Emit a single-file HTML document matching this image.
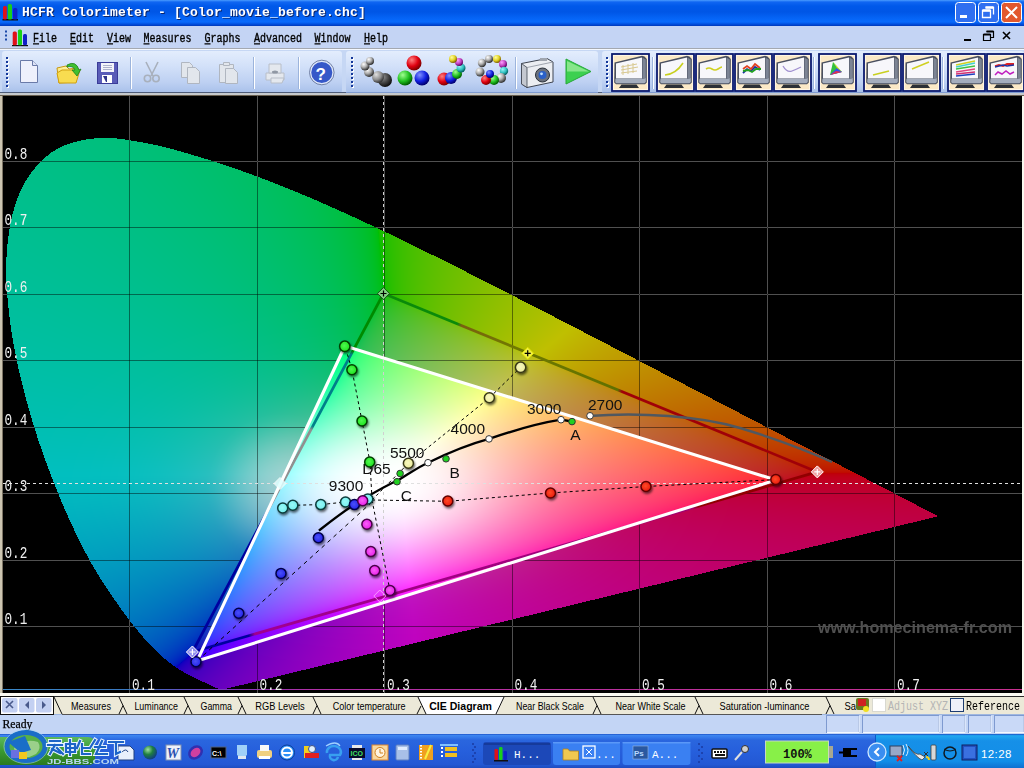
<!DOCTYPE html>
<html><head><meta charset="utf-8">
<style>
*{margin:0;padding:0;box-sizing:border-box}
html,body{width:1024px;height:768px;overflow:hidden;background:#000;font-family:"Liberation Sans",sans-serif}
.a{position:absolute}
#title{left:0;top:0;width:1024px;height:26px;background:linear-gradient(#4a9cff 0,#1066f2 2px,#0059ea 6px,#0056e6 12px,#0666f8 19px,#086afc 22px,#004ad8 24.5px,#0038b8 26px)}
#ttext{left:22px;top:5px;color:#fff;font:bold 13px "Liberation Mono",monospace;letter-spacing:0.2px;text-shadow:1px 1px 0 #0a246a;white-space:pre}
#menu{left:0;top:26px;width:1024px;height:23px;background:#c4d4f4;border-bottom:1px solid #a4a8b0}
#menu span{position:absolute;top:6px;font:10px "Liberation Mono",monospace;color:#000;-webkit-text-stroke:0.3px #000;white-space:pre;display:inline-block;transform:scaleY(1.25);transform-origin:0 0}
#tbbg{left:0;top:49px;width:1024px;height:47px;background:#c5d6f3}
.tb{top:51px;height:42px;border-radius:3px;background:linear-gradient(#e2ecfd 0,#d4e2fa 30%,#bcd0f2 70%,#a9c1ec 100%);box-shadow:inset -1px -1px 0 #8ba6d6}
#chart{left:0;top:96px;width:1024px;height:597px;background:#000}
#tabs{left:0;top:693px;width:1024px;height:22px;background:#ece9d8;border-top:3px solid #fbfaf3}
#status{left:0;top:715px;width:1024px;height:19px;background:#c4d5f4}
#task{left:0;top:734px;width:1024px;height:34px;background:linear-gradient(#3b83f1 0,#2a6fe6 2px,#245ddb 6px,#2157d6 50%,#1e52d0 90%,#1d4fc8 100%)}
</style></head><body>
<div class="a" id="chart"></div><div class="a" style="left:1022px;top:96px;width:2px;height:597px;background:#f8f8ee"></div><div class="a" style="left:0;top:96px;width:2px;height:597px;background:#cdc6b2"></div><div class="a" style="left:2px;top:96px;width:1px;height:597px;background:#7c7464"></div>
<svg class="a" style="left:0;top:0" width="1024" height="768" viewBox="0 0 1024 768">
<defs>
<linearGradient id="fbA" gradientUnits="userSpaceOnUse" x1="0" y1="300" x2="940" y2="500"><stop offset="0" stop-color="#00bf8e"/><stop offset="0.3" stop-color="#00bf78"/><stop offset="0.42" stop-color="#30bf10"/><stop offset="0.58" stop-color="#b0b800"/><stop offset="0.75" stop-color="#c86010"/><stop offset="1" stop-color="#c80030"/></linearGradient>
<linearGradient id="fbB" gradientUnits="userSpaceOnUse" x1="0" y1="420" x2="0" y2="690"><stop offset="0" stop-color="#00b4a8" stop-opacity="0"/><stop offset="0.35" stop-color="#00b0b0" stop-opacity="0.8"/><stop offset="1" stop-color="#0048c0"/></linearGradient>
<linearGradient id="fbC" gradientUnits="userSpaceOnUse" x1="200" y1="690" x2="940" y2="520"><stop offset="0" stop-color="#6000c8"/><stop offset="0.3" stop-color="#a800c0"/><stop offset="1" stop-color="#c00040"/></linearGradient>
<radialGradient id="fbW" gradientUnits="userSpaceOnUse" cx="375" cy="485" r="260"><stop offset="0" stop-color="#fff"/><stop offset="0.25" stop-color="#fff" stop-opacity="0.85"/><stop offset="1" stop-color="#fff" stop-opacity="0"/></radialGradient>
<linearGradient id="fbT" gradientUnits="userSpaceOnUse" x1="250" y1="480" x2="770" y2="480"><stop offset="0" stop-color="#40f0ff"/><stop offset="0.3" stop-color="#e0ffd0"/><stop offset="0.6" stop-color="#ffd090"/><stop offset="1" stop-color="#ff2040"/></linearGradient>
<linearGradient id="fbT2" gradientUnits="userSpaceOnUse" x1="0" y1="346" x2="0" y2="661"><stop offset="0" stop-color="#40ff60" stop-opacity="0.6"/><stop offset="0.35" stop-color="#fff" stop-opacity="0"/><stop offset="0.7" stop-color="#fff" stop-opacity="0"/><stop offset="1" stop-color="#a020ff" stop-opacity="0.8"/></linearGradient>
<linearGradient id="fbT3" gradientUnits="userSpaceOnUse" x1="197" y1="661" x2="372" y2="500"><stop offset="0" stop-color="#3040ff" stop-opacity="0.95"/><stop offset="0.7" stop-color="#60c0ff" stop-opacity="0"/></linearGradient>
<linearGradient id="fbT4" gradientUnits="userSpaceOnUse" x1="420" y1="600" x2="380" y2="480"><stop offset="0" stop-color="#f020f0" stop-opacity="0.9"/><stop offset="1" stop-color="#ff80ff" stop-opacity="0"/></linearGradient>
</defs>
<rect x="3" y="96" width="1019" height="597" fill="#000"/>
<path d="M223 689 220 689 218 688 214 687 211 685 207 684 203 682 199 680 194 678 191 676 188 675 185 673 182 671 178 669 174 666 170 663 165 659 160 654 154 649 148 643 141 635 134 626 126 616 118 604 109 591 99 576 89 559 79 540 69 519 59 497 50 472 40 445 31 418 24 391 17 362 12 335 8 308 6 282 6 257 9 234 13 213 19 194 28 177 39 164 51 153 65 145 80 141 96 138 113 138 130 140 147 143 164 147 182 152 199 157 215 162 231 167 247 173 263 179 279 185 294 191 310 198 325 204 340 211 356 218 371 225 386 232 401 240 416 247 432 255 447 262 462 270 477 277 492 285 507 293 523 301 538 308 553 316 568 324 583 332 597 339 612 347 626 354 641 362 655 369 669 376 683 384 696 391 709 397 722 404 735 411 747 417 759 423 770 429 781 435 791 440 801 445 810 450 819 455 828 459 836 463 843 467 850 471 857 474 863 477 869 480 874 483 879 485 883 488 887 490 891 492 895 494 898 495 901 497 904 499 907 500 912 503 916 505 920 507 923 508 926 510 929 512 932 513 935 515 938 516Z" fill="url(#fbA)"/>
<path d="M0 420H300L200 690H0Z" fill="url(#fbB)" clip-path="url(#fbclip)"/>
<clipPath id="fbclip"><path d="M223 689 220 689 218 688 214 687 211 685 207 684 203 682 199 680 194 678 191 676 188 675 185 673 182 671 178 669 174 666 170 663 165 659 160 654 154 649 148 643 141 635 134 626 126 616 118 604 109 591 99 576 89 559 79 540 69 519 59 497 50 472 40 445 31 418 24 391 17 362 12 335 8 308 6 282 6 257 9 234 13 213 19 194 28 177 39 164 51 153 65 145 80 141 96 138 113 138 130 140 147 143 164 147 182 152 199 157 215 162 231 167 247 173 263 179 279 185 294 191 310 198 325 204 340 211 356 218 371 225 386 232 401 240 416 247 432 255 447 262 462 270 477 277 492 285 507 293 523 301 538 308 553 316 568 324 583 332 597 339 612 347 626 354 641 362 655 369 669 376 683 384 696 391 709 397 722 404 735 411 747 417 759 423 770 429 781 435 791 440 801 445 810 450 819 455 828 459 836 463 843 467 850 471 857 474 863 477 869 480 874 483 879 485 883 488 887 490 891 492 895 494 898 495 901 497 904 499 907 500 912 503 916 505 920 507 923 508 926 510 929 512 932 513 935 515 938 516Z"/></clipPath>
<path d="M140 650L224 689L938 516L776 480L197 661Z" fill="url(#fbC)" clip-path="url(#fbclip)"/>
<path d="M345 346L776 480L197 661Z" fill="url(#fbT)"/>
<path d="M345 346L776 480L197 661Z" fill="url(#fbT2)"/>
<path d="M345 346L776 480L197 661Z" fill="url(#fbW)"/><path d="M345 346L776 480L197 661Z" fill="url(#fbT4)"/><path d="M345 346L776 480L197 661Z" fill="url(#fbT3)"/>
<g stroke="#505050" stroke-width="1"><path d="M129.5 96V693M257.5 96V693M384.5 96V693M512.5 96V693M639.5 96V693M767.5 96V693M894.5 96V693M3 161.5H1022M3 227.5H1022M3 294.5H1022M3 360.5H1022M3 427.5H1022M3 493.5H1022M3 560.5H1022M3 626.5H1022"/></g>
</svg>
<canvas id="cv" class="a" width="1024" height="768" style="left:0;top:0"></canvas>
<svg class="a" style="left:0;top:0" width="1024" height="768" viewBox="0 0 1024 768">
<defs>
<radialGradient id="rR" cx="0.45" cy="0.45" r="0.6"><stop offset="0" stop-color="#ff4828"/><stop offset="1" stop-color="#e81808"/></radialGradient><radialGradient id="rG" cx="0.45" cy="0.45" r="0.6"><stop offset="0" stop-color="#50f850"/><stop offset="1" stop-color="#18e018"/></radialGradient><radialGradient id="rB" cx="0.45" cy="0.45" r="0.6"><stop offset="0" stop-color="#4a50f8"/><stop offset="1" stop-color="#2020e8"/></radialGradient><radialGradient id="rC" cx="0.45" cy="0.45" r="0.6"><stop offset="0" stop-color="#98f8f8"/><stop offset="1" stop-color="#70eeee"/></radialGradient><radialGradient id="rM" cx="0.45" cy="0.45" r="0.6"><stop offset="0" stop-color="#f860f8"/><stop offset="1" stop-color="#e818e8"/></radialGradient><radialGradient id="rY" cx="0.45" cy="0.45" r="0.6"><stop offset="0" stop-color="#f8f8c0"/><stop offset="1" stop-color="#eaea98"/></radialGradient><filter id="sh" x="-50%" y="-50%" width="200%" height="200%"><feDropShadow dx="1" dy="1.8" stdDeviation="1.3" flood-color="#000" flood-opacity="0.6"/></filter>
<linearGradient id="gGR" gradientUnits="userSpaceOnUse" x1="383.5" y1="293.5" x2="817.3" y2="471.9">
<stop offset="0" stop-color="#0a8a0a"/><stop offset="0.17" stop-color="#0a8a0a"/><stop offset="0.18" stop-color="#7a6010"/><stop offset="0.3" stop-color="#707a00"/><stop offset="0.54" stop-color="#607000"/><stop offset="0.55" stop-color="#a00008"/><stop offset="1" stop-color="#a00008"/></linearGradient>
<linearGradient id="gGB" gradientUnits="userSpaceOnUse" x1="383.5" y1="293.5" x2="192.4" y2="652">
<stop offset="0" stop-color="#008a00"/><stop offset="0.16" stop-color="#008a00"/><stop offset="0.17" stop-color="#00808a"/><stop offset="0.37" stop-color="#00808a"/><stop offset="0.38" stop-color="#909090"/><stop offset="0.6" stop-color="#909090"/><stop offset="0.62" stop-color="#0000a0"/><stop offset="1" stop-color="#0000a0"/></linearGradient>
<linearGradient id="gBR" gradientUnits="userSpaceOnUse" x1="192.4" y1="652" x2="817.3" y2="471.9">
<stop offset="0" stop-color="#0000a0"/><stop offset="0.09" stop-color="#0000a0"/><stop offset="0.1" stop-color="#a00090"/><stop offset="0.8" stop-color="#a00070"/><stop offset="0.81" stop-color="#900000"/><stop offset="1" stop-color="#900000"/></linearGradient>
<linearGradient id="gAx" x1="0" y1="0" x2="1" y2="0"><stop offset="0" stop-color="#3a88c8"/><stop offset="0.125" stop-color="#3a78c0"/><stop offset="0.2" stop-color="#7040c0"/><stop offset="0.3" stop-color="#b030a8"/><stop offset="1" stop-color="#c83090"/></linearGradient>
</defs>
<rect x="3" y="689" width="1019" height="1" fill="url(#gAx)"/>
<g stroke-dasharray="3 3" stroke-width="1" fill="none">
<path d="M383.5 96V692" stroke="#d0d0d0"/>
<path d="M3 483.5H1022" stroke="#e0e0e0"/>
</g>
<g fill="none" stroke-width="2.7" stroke-linecap="round">
<path d="M383.5 293.5L817.3 471.9" stroke="url(#gGR)"/>
<path d="M383.5 293.5L192.4 652" stroke="url(#gGB)"/>
<path d="M192.4 652L817.3 471.9" stroke="url(#gBR)"/>
</g>
<path d="M345 346L776 480L197 661Z" fill="none" stroke="#fff" stroke-width="3.1" stroke-linejoin="miter"/>
<g fill="none" stroke="#000" stroke-width="1" stroke-dasharray="3 3">
<path d="M372 500L447.8 501.3L550.5 493L646 486.5L775.8 479.6"/>
<path d="M372 499L370 462L362 421L352 370L345 346"/>
<path d="M372 502L196 662" stroke-dasharray="4 4"/>
<path d="M372 500L345.5 502L320.8 504.6L292.8 505.3L282.7 508"/>
<path d="M372 500L390 590.6"/>
<path d="M372 500L408.4 463.3L489.4 397.8L520.6 367.3"/>
</g>
<path d="M588.6 416 C 640 412, 700 416, 740 428 S 810 452, 832 462" fill="none" stroke="#505860" stroke-width="2.4"/>
<path d="M318.9 530.6 C 335 518, 345 510, 360 501 S 385 486, 399 479.8 C 410 473, 420 466, 428 462.7 C 450 452, 470 444, 489 438.9 C 515 430, 540 423, 561 419.7 L 572 421.5" fill="none" stroke="#000" stroke-width="2.3"/>
<g stroke="#333" stroke-width="1">
<circle cx="590" cy="415.8" r="3.3" fill="#fff"/><circle cx="561" cy="419.7" r="3.3" fill="#fff"/><circle cx="489" cy="438.9" r="3.3" fill="#fff"/><circle cx="428" cy="462.7" r="3.3" fill="#fff"/>
<circle cx="572" cy="421.6" r="3.3" fill="#20d020"/><circle cx="446" cy="458.8" r="3.3" fill="#20d020"/><circle cx="400.1" cy="473.5" r="3.3" fill="#20d020"/><circle cx="397" cy="481.7" r="3.3" fill="#20d020"/>
</g>
<g font-family="Liberation Sans" font-size="15.5" fill="#111">
<text x="328.8" y="491">9300</text><text x="362.3" y="474.4">D65</text><text x="390" y="458">5500</text><text x="450.6" y="433.6">4000</text><text x="527" y="414.3">3000</text><text x="588" y="410.4">2700</text><text x="570.2" y="440.3">A</text><text x="449.6" y="477.5">B</text><text x="400.8" y="501">C</text>
</g>
<g stroke-width="1.5" filter="url(#sh)">
<circle cx="775.8" cy="479.6" r="5.0" fill="url(#rR)" stroke="#600000"/><circle cx="646" cy="486.5" r="5.0" fill="url(#rR)" stroke="#600000"/><circle cx="550.5" cy="493" r="5.0" fill="url(#rR)" stroke="#600000"/><circle cx="447.8" cy="501" r="5.0" fill="url(#rR)" stroke="#600000"/>
<circle cx="344.8" cy="346.3" r="5.2" fill="url(#rG)" stroke="#004000"/><circle cx="351.9" cy="369.7" r="5.0" fill="url(#rG)" stroke="#004000"/><circle cx="362" cy="421" r="5.0" fill="url(#rG)" stroke="#004000"/><circle cx="369.7" cy="462" r="5.0" fill="url(#rG)" stroke="#004000"/>
<circle cx="196" cy="661.8" r="5.0" fill="url(#rB)" stroke="#000048"/><circle cx="238.8" cy="613.3" r="5.0" fill="url(#rB)" stroke="#000048"/><circle cx="281" cy="573.4" r="5.0" fill="url(#rB)" stroke="#000048"/><circle cx="318.4" cy="537.7" r="5.0" fill="url(#rB)" stroke="#000048"/>
<circle cx="282.7" cy="508" r="5.0" fill="url(#rC)" stroke="#0c3c3c"/><circle cx="292.8" cy="505.3" r="5.0" fill="url(#rC)" stroke="#0c3c3c"/><circle cx="320.8" cy="504.6" r="5.0" fill="url(#rC)" stroke="#0c3c3c"/><circle cx="345.5" cy="502" r="5.0" fill="url(#rC)" stroke="#0c3c3c"/><circle cx="367.8" cy="498.9" r="5.0" fill="url(#rC)" stroke="#0c3c3c"/>
<circle cx="354.4" cy="504.6" r="5.0" fill="url(#rB)" stroke="#000048"/>
<circle cx="390" cy="590.6" r="5.0" fill="url(#rM)" stroke="#480048"/><circle cx="374.7" cy="570.6" r="5.0" fill="url(#rM)" stroke="#480048"/><circle cx="370.8" cy="551.6" r="5.0" fill="url(#rM)" stroke="#480048"/><circle cx="366.9" cy="524.3" r="5.0" fill="url(#rM)" stroke="#480048"/><circle cx="362.7" cy="500.8" r="5.0" fill="url(#rM)" stroke="#480048"/>
<circle cx="520.6" cy="367.3" r="5.2" fill="url(#rY)" stroke="#383818"/><circle cx="489.4" cy="397.8" r="5.0" fill="url(#rY)" stroke="#383818"/><circle cx="408.4" cy="463.3" r="5.0" fill="url(#rY)" stroke="#383818"/>
</g>
<g stroke-width="1">
<path d="M383.5 287.5L389.5 293.5L383.5 299.5L377.5 293.5Z" fill="#80d080" stroke="#205020"/>
<path d="M527.7 347.3L533.7 353.3L527.7 359.3L521.7 353.3Z" fill="#f0f040" stroke="#e0e000"/>
<path d="M817.3 465.9L823.3 471.9L817.3 477.9L811.3 471.9Z" fill="#f0a0a0" stroke="#fff"/>
<path d="M192.4 646L198.4 652L192.4 658L186.4 652Z" fill="#9090f0" stroke="#fff"/>
<path d="M280 477.5L286 483.5L280 489.5L274 483.5Z" fill="#e0ffff" stroke="#fff" opacity="0.85"/>
<path d="M379.8 590L385.8 596L379.8 602L373.8 596Z" fill="none" stroke="#ffb0ff" opacity="0.8"/>
</g>
<g stroke="#000" stroke-width="1.2">
<path d="M380.5 293.5h6M383.5 290.5v6M524.7 353.3h6M527.7 350.3v6"/>
<path d="M814.3 471.9h6M817.3 468.9v6M189.4 652h6M192.4 649v6" stroke="#fff"/>
</g>
<text x="818" y="633" font-family="Liberation Sans" font-weight="bold" font-size="16" fill="#505050" textLength="194" lengthAdjust="spacingAndGlyphs">www.homecinema-fr.com</text>
<g font-family="Liberation Mono" font-size="12.7" fill="#f0f0f0">
<text transform="translate(4.5 158.9) scale(1 1.3)">0.8</text>
<text transform="translate(4.5 225.4) scale(1 1.3)">0.7</text>
<text transform="translate(4.5 291.9) scale(1 1.3)">0.6</text>
<text transform="translate(4.5 358.4) scale(1 1.3)">0.5</text>
<text transform="translate(4.5 424.9) scale(1 1.3)">0.4</text>
<text transform="translate(4.5 491.4) scale(1 1.3)">0.3</text>
<text transform="translate(4.5 557.9) scale(1 1.3)">0.2</text>
<text transform="translate(4.5 624.4) scale(1 1.3)">0.1</text>
<text transform="translate(132 690) scale(1 1.3)">0.1</text>
<text transform="translate(259.5 690) scale(1 1.3)">0.2</text>
<text transform="translate(387 690) scale(1 1.3)">0.3</text>
<text transform="translate(514.5 690) scale(1 1.3)">0.4</text>
<text transform="translate(642 690) scale(1 1.3)">0.5</text>
<text transform="translate(769.5 690) scale(1 1.3)">0.6</text>
<text transform="translate(897 690) scale(1 1.3)">0.7</text>
</g>
</svg>
<div class="a" id="title"><div class="a" id="ttext">HCFR Colorimeter - [Color_movie_before.chc]</div>
<svg class="a" style="left:0;top:0" width="1024" height="26">
<rect x="2.5" y="19" width="15.5" height="1.5" fill="#101010"/>
<rect x="3" y="6" width="3.8" height="13.5" rx="1.5" fill="#e01018"/><rect x="7.8" y="4" width="4.2" height="15.5" rx="1.5" fill="#18d018"/><rect x="13" y="8" width="4.4" height="11.5" rx="1.5" fill="#1020c8"/>
<g>
<rect x="955.5" y="2.5" width="20" height="20" rx="3" fill="#2f6ff0" stroke="#fff"/><rect x="960" y="15" width="7" height="3" fill="#fff"/>
<rect x="978.5" y="2.5" width="20" height="20" rx="3" fill="#2f6ff0" stroke="#fff"/><path d="M982.5 10.5h8v7h-8zM985.5 7.5h8v7" fill="none" stroke="#fff" stroke-width="1.3"/><path d="M982.5 10.5h8M985.5 7.5h8" stroke="#fff" stroke-width="2.4"/>
<rect x="1001.5" y="2.5" width="20" height="20" rx="3" fill="#e2582e" stroke="#fff"/><path d="M1006 7l11 11M1017 7l-11 11" stroke="#fff" stroke-width="2"/>
</g>
</svg></div>
<div class="a" id="menu">
<svg class="a" style="left:0;top:0" width="1024" height="23">
<g fill="#1a48a8"><rect x="5" y="4.5" width="2" height="2"/><rect x="5" y="8.5" width="2" height="2"/><rect x="5" y="12.5" width="2" height="2"/></g>
<rect x="12" y="19" width="16" height="1.2" fill="#101010"/>
<rect x="12.7" y="5.6" width="4.2" height="13.6" rx="1.5" fill="#e01018"/><rect x="17.9" y="3.6" width="4.1" height="15.6" rx="1.5" fill="#18d018"/><rect x="23" y="7.9" width="4" height="11.3" rx="1.5" fill="#1020c8"/>
<rect x="964" y="13" width="7" height="2" fill="#000"/>
<path d="M983.5 8.5h7v6h-7zM986.5 5.5h7v6h-3" fill="none" stroke="#000" stroke-width="1.2"/><path d="M983.5 8.5h7M986.5 5.5h7" stroke="#000" stroke-width="2"/>
<path d="M1003 6l7 7M1010 6l-7 7" stroke="#000" stroke-width="1.6"/>
</svg>
<span style="left:33px"><u>F</u>ile</span><span style="left:70px"><u>E</u>dit</span><span style="left:107px"><u>V</u>iew</span><span style="left:143.5px"><u>M</u>easures</span><span style="left:204.5px"><u>G</u>raphs</span><span style="left:254px"><u>A</u>dvanced</span><span style="left:314.5px"><u>W</u>indow</span><span style="left:364px"><u>H</u>elp</span>
</div>
<svg class="a" style="left:0;top:49px" width="1024" height="47" viewBox="0 49 1024 47">
<defs>
<linearGradient id="tbg" x1="0" y1="0" x2="0" y2="1"><stop offset="0" stop-color="#e3edfd"/><stop offset="0.35" stop-color="#d3e1f9"/><stop offset="0.75" stop-color="#bdd0f2"/><stop offset="1" stop-color="#a8c0ea"/></linearGradient>
<radialGradient id="ball" cx="0.35" cy="0.3" r="0.7"><stop offset="0" stop-color="#fff"/><stop offset="0.5" stop-color="#b0b0b0"/><stop offset="1" stop-color="#303030"/></radialGradient>
<radialGradient id="ballD" cx="0.35" cy="0.3" r="0.7"><stop offset="0" stop-color="#909090"/><stop offset="0.6" stop-color="#404040"/><stop offset="1" stop-color="#101010"/></radialGradient><radialGradient id="ballM" cx="0.35" cy="0.3" r="0.7"><stop offset="0" stop-color="#e0e0e0"/><stop offset="0.6" stop-color="#909090"/><stop offset="1" stop-color="#383838"/></radialGradient><radialGradient id="bR" cx="0.35" cy="0.3" r="0.7"><stop offset="0" stop-color="#ff8080"/><stop offset="0.6" stop-color="#e00010"/><stop offset="1" stop-color="#800000"/></radialGradient>
<radialGradient id="bG" cx="0.35" cy="0.3" r="0.7"><stop offset="0" stop-color="#a0ff90"/><stop offset="0.6" stop-color="#20c020"/><stop offset="1" stop-color="#006000"/></radialGradient>
<radialGradient id="bB" cx="0.35" cy="0.3" r="0.7"><stop offset="0" stop-color="#8090ff"/><stop offset="0.6" stop-color="#1020e0"/><stop offset="1" stop-color="#000070"/></radialGradient>
<radialGradient id="bY" cx="0.35" cy="0.3" r="0.7"><stop offset="0" stop-color="#ffffa0"/><stop offset="0.6" stop-color="#e0d020"/><stop offset="1" stop-color="#806000"/></radialGradient>
<radialGradient id="bM" cx="0.35" cy="0.3" r="0.7"><stop offset="0" stop-color="#ffa0ff"/><stop offset="0.6" stop-color="#c040c0"/><stop offset="1" stop-color="#600060"/></radialGradient>
<radialGradient id="bC" cx="0.35" cy="0.3" r="0.7"><stop offset="0" stop-color="#98f8f8"/><stop offset="0.6" stop-color="#30c0c0"/><stop offset="1" stop-color="#006060"/></radialGradient>
<linearGradient id="fold" x1="0" y1="0" x2="0" y2="1"><stop offset="0" stop-color="#fff6a8"/><stop offset="1" stop-color="#f0c020"/></linearGradient>
</defs>
<rect x="0" y="49" width="1024" height="47" fill="#c6d7f4"/>
<rect x="0" y="49" width="1024" height="1" fill="#f4f8ff"/>
<rect x="0" y="93" width="1024" height="2" fill="#c6cacd"/>
<rect x="0" y="95" width="1024" height="1" fill="#6a6050"/>
<rect x="2" y="51" width="340" height="42" rx="3" fill="url(#tbg)"/><rect x="0" y="92" width="1024" height="1" fill="#4e5c78"/>
<rect x="346" y="51" width="252" height="42" rx="3" fill="url(#tbg)"/><rect x="346" y="92" width="252" height="1" fill="#7f9bd0"/>
<rect x="602" y="51" width="422" height="42" rx="3" fill="url(#tbg)"/><rect x="602" y="92" width="422" height="1" fill="#7f9bd0"/>
<rect x="7" y="58" width="2" height="2" fill="#fff"/><rect x="6" y="57" width="2" height="2" fill="#14389a"/><rect x="7" y="62" width="2" height="2" fill="#fff"/><rect x="6" y="61" width="2" height="2" fill="#14389a"/><rect x="7" y="66" width="2" height="2" fill="#fff"/><rect x="6" y="65" width="2" height="2" fill="#14389a"/><rect x="7" y="70" width="2" height="2" fill="#fff"/><rect x="6" y="69" width="2" height="2" fill="#14389a"/><rect x="7" y="74" width="2" height="2" fill="#fff"/><rect x="6" y="73" width="2" height="2" fill="#14389a"/><rect x="7" y="78" width="2" height="2" fill="#fff"/><rect x="6" y="77" width="2" height="2" fill="#14389a"/><rect x="7" y="82" width="2" height="2" fill="#fff"/><rect x="6" y="81" width="2" height="2" fill="#14389a"/><rect x="7" y="86" width="2" height="2" fill="#fff"/><rect x="6" y="85" width="2" height="2" fill="#14389a"/><rect x="352" y="58" width="2" height="2" fill="#fff"/><rect x="351" y="57" width="2" height="2" fill="#14389a"/><rect x="352" y="62" width="2" height="2" fill="#fff"/><rect x="351" y="61" width="2" height="2" fill="#14389a"/><rect x="352" y="66" width="2" height="2" fill="#fff"/><rect x="351" y="65" width="2" height="2" fill="#14389a"/><rect x="352" y="70" width="2" height="2" fill="#fff"/><rect x="351" y="69" width="2" height="2" fill="#14389a"/><rect x="352" y="74" width="2" height="2" fill="#fff"/><rect x="351" y="73" width="2" height="2" fill="#14389a"/><rect x="352" y="78" width="2" height="2" fill="#fff"/><rect x="351" y="77" width="2" height="2" fill="#14389a"/><rect x="352" y="82" width="2" height="2" fill="#fff"/><rect x="351" y="81" width="2" height="2" fill="#14389a"/><rect x="352" y="86" width="2" height="2" fill="#fff"/><rect x="351" y="85" width="2" height="2" fill="#14389a"/><rect x="607" y="58" width="2" height="2" fill="#fff"/><rect x="606" y="57" width="2" height="2" fill="#14389a"/><rect x="607" y="62" width="2" height="2" fill="#fff"/><rect x="606" y="61" width="2" height="2" fill="#14389a"/><rect x="607" y="66" width="2" height="2" fill="#fff"/><rect x="606" y="65" width="2" height="2" fill="#14389a"/><rect x="607" y="70" width="2" height="2" fill="#fff"/><rect x="606" y="69" width="2" height="2" fill="#14389a"/><rect x="607" y="74" width="2" height="2" fill="#fff"/><rect x="606" y="73" width="2" height="2" fill="#14389a"/><rect x="607" y="78" width="2" height="2" fill="#fff"/><rect x="606" y="77" width="2" height="2" fill="#14389a"/><rect x="607" y="82" width="2" height="2" fill="#fff"/><rect x="606" y="81" width="2" height="2" fill="#14389a"/><rect x="607" y="86" width="2" height="2" fill="#fff"/><rect x="606" y="85" width="2" height="2" fill="#14389a"/>
<rect x="130" y="57" width="1" height="32" fill="#9cb4dc"/><rect x="131" y="57" width="1" height="32" fill="#fff"/><rect x="253" y="57" width="1" height="32" fill="#9cb4dc"/><rect x="254" y="57" width="1" height="32" fill="#fff"/><rect x="298" y="57" width="1" height="32" fill="#9cb4dc"/><rect x="299" y="57" width="1" height="32" fill="#fff"/><rect x="515" y="57" width="1" height="32" fill="#9cb4dc"/><rect x="516" y="57" width="1" height="32" fill="#fff"/><rect x="652" y="57" width="1" height="32" fill="#9cb4dc"/><rect x="653" y="57" width="1" height="32" fill="#fff"/><rect x="813" y="57" width="1" height="32" fill="#9cb4dc"/><rect x="814" y="57" width="1" height="32" fill="#fff"/><rect x="942" y="57" width="1" height="32" fill="#9cb4dc"/><rect x="943" y="57" width="1" height="32" fill="#fff"/>
<path d="M20.5 60.5H32.5L37.5 65.5V82.5H20.5Z" fill="#eef0fc" stroke="#6a7aa8"/><path d="M32.5 60.5V65.5H37.5" fill="#dde2f6" stroke="#6a7aa8"/>
<path d="M57 68L66 66L69 69L78 68L76 82L59 83Z" fill="url(#fold)" stroke="#c89810"/><path d="M57 73L62 70L80 70L76 83L59 83Z" fill="#f8dc50" stroke="#d0a010"/>
<path d="M67 65Q76 60 79 70L81 69L77 76L72 70L75 70Q73 65 67 67Z" fill="#40c030" stroke="#208020" stroke-width="0.8"/>
<rect x="97.5" y="62.5" width="20" height="21" fill="#5a5cb8" stroke="#3a3c98"/><rect x="101" y="63" width="13" height="9" fill="#f4f4fa"/><path d="M103 65.5h9M103 67.5h9M103 69.5h9" stroke="#9aa0c0" stroke-width="0.8"/><rect x="102" y="75" width="10" height="8" fill="#fff"/><path d="M103 76h4v6h-1z" fill="#30348a"/>
<g fill="none" stroke="#a8b0bc" stroke-width="1.6"><circle cx="147.5" cy="78.5" r="3.2"/><circle cx="156" cy="78.5" r="3.2"/><path d="M146 62L153 76M158 62L151 76"/></g>
<g fill="#e2e6ec" stroke="#b0b6c0"><path d="M181.5 62.5h8l3 3v12h-11z"/><path d="M187.5 67.5h8l4 4v12h-12z"/></g>
<g fill="#e2e6ec" stroke="#b0b6c0"><path d="M219.5 64.5h14v18h-14z"/><path d="M223.5 62.5h6v3h-6z"/><path d="M225.5 68.5h8l4 4v11h-12z"/></g>
<g fill="#e4e8ee" stroke="#b8bec8"><path d="M266 73h18v7h-18z"/><path d="M269 64h12v9h-12z"/><path d="M271 78h13l-2 5h-11z"/></g><ellipse cx="275" cy="72" rx="3" ry="1.5" fill="#9098a4"/>
<circle cx="321.8" cy="72.5" r="11.3" fill="#3658c8" stroke="#dfe8fa" stroke-width="1.5"/><circle cx="321.8" cy="72.5" r="12.3" fill="none" stroke="#5a6a90" stroke-width="0.8"/>
<text x="315.5" y="79.5" font-family="Liberation Sans" font-weight="bold" font-size="17" fill="#fff">?</text>
<circle cx="385" cy="80" r="7" fill="url(#ballD)"/><circle cx="378" cy="77" r="6" fill="url(#ballM)"/><circle cx="369" cy="72" r="5" fill="url(#ball)"/><circle cx="365" cy="66" r="4.5" fill="url(#ball)"/><circle cx="370" cy="61" r="4" fill="url(#ball)"/>
<circle cx="414" cy="63" r="7.5" fill="url(#bR)"/><circle cx="405" cy="78" r="7.5" fill="url(#bG)"/><circle cx="422" cy="78" r="7.5" fill="url(#bB)"/>
<circle cx="444" cy="79" r="6.5" fill="url(#bR)"/><circle cx="451" cy="78" r="6" fill="url(#bB)"/><circle cx="457" cy="74" r="5" fill="url(#bG)"/><circle cx="461" cy="68" r="4.5" fill="url(#bC)"/><circle cx="459" cy="62" r="4" fill="url(#bM)"/><circle cx="453" cy="59" r="4" fill="url(#bY)"/>
<circle cx="482" cy="63" r="4.2" fill="url(#ball)"/><circle cx="489" cy="59" r="4" fill="url(#ball)"/><circle cx="497" cy="59" r="4" fill="url(#bY)"/><circle cx="503" cy="64" r="4" fill="url(#bM)"/><circle cx="504" cy="71" r="4.2" fill="url(#bC)"/><circle cx="501" cy="78" r="5" fill="url(#ball)"/><circle cx="494" cy="80" r="5" fill="url(#bG)"/><circle cx="486" cy="80" r="5" fill="url(#bR)"/><circle cx="480" cy="72" r="4.5" fill="url(#ball)"/><circle cx="490" cy="74" r="4" fill="url(#bB)"/>
<path d="M521.5 63.5L547 58.5L553 62V82L527 87.5L521.5 84Z" fill="#eceef2" stroke="#3e4450"/><path d="M521.5 63.5L527 67.5V87.5L521.5 84Z" fill="#c4c8d0" stroke="#3e4450" stroke-width="0.8"/><path d="M527 67.5L553 62" stroke="#8a909c" stroke-width="0.8"/><rect x="540" y="58" width="7" height="3" fill="#a0a6b0"/><circle cx="542.5" cy="75" r="7" fill="#6a707c" stroke="#2a3038"/><circle cx="542.5" cy="75" r="4" fill="#2a60c8"/><circle cx="541.5" cy="73.8" r="1.4" fill="#c0e0ff"/>
<path d="M566 59L591 71.5L566 84Z" fill="#3cd050" stroke="#26a838"/><path d="M567 61L589 71.5L567 71.5Z" fill="#86e68a"/>
<g transform="translate(611 53)"><rect x="1" y="1" width="37" height="37" fill="#fbe9c6" stroke="#0a1a70" stroke-width="1.8"/><rect x="2.5" y="2.5" width="34" height="34" fill="none" stroke="#fff6e4" stroke-width="1"/>
<path d="M3.5 9.5L31 2.8L33.5 3.5L35.8 6V29.5L34 31.2H5L3.2 29.5Z" fill="#4a5060"/>
<path d="M5 10.6L31 4.6V25.5H5Z" fill="#f7f7fb"/>
<path d="M4.5 25.8H31.5L34.8 25V29L33.5 30.3H5.2L4.2 29Z" fill="#a4adbd"/><path d="M31.5 4.8L34.8 6.6V25L31.5 25.8Z" fill="#7c8494"/>
<path d="M8 35H28L25.5 31.5H10.5Z" fill="#2c3036"/>
<path d="M10 14L26 11M10 17L27 14M10 20L26 18M12 12v10M17 11v10M22 10v10" stroke="#d8c890" stroke-width="1" fill="none"/></g><g transform="translate(656 53)"><rect x="1" y="1" width="37" height="37" fill="#fbe9c6" stroke="#0a1a70" stroke-width="1.8"/><rect x="2.5" y="2.5" width="34" height="34" fill="none" stroke="#fff6e4" stroke-width="1"/>
<path d="M3.5 9.5L31 2.8L33.5 3.5L35.8 6V29.5L34 31.2H5L3.2 29.5Z" fill="#4a5060"/>
<path d="M5 10.6L31 4.6V25.5H5Z" fill="#f7f7fb"/>
<path d="M4.5 25.8H31.5L34.8 25V29L33.5 30.3H5.2L4.2 29Z" fill="#a4adbd"/><path d="M31.5 4.8L34.8 6.6V25L31.5 25.8Z" fill="#7c8494"/>
<path d="M8 35H28L25.5 31.5H10.5Z" fill="#2c3036"/>
<path d="M9 22Q20 21 27 10" stroke="#c8d020" stroke-width="1.6" fill="none"/></g><g transform="translate(695 53)"><rect x="1" y="1" width="37" height="37" fill="#fbe9c6" stroke="#0a1a70" stroke-width="1.8"/><rect x="2.5" y="2.5" width="34" height="34" fill="none" stroke="#fff6e4" stroke-width="1"/>
<path d="M3.5 9.5L31 2.8L33.5 3.5L35.8 6V29.5L34 31.2H5L3.2 29.5Z" fill="#4a5060"/>
<path d="M5 10.6L31 4.6V25.5H5Z" fill="#f7f7fb"/>
<path d="M4.5 25.8H31.5L34.8 25V29L33.5 30.3H5.2L4.2 29Z" fill="#a4adbd"/><path d="M31.5 4.8L34.8 6.6V25L31.5 25.8Z" fill="#7c8494"/>
<path d="M8 35H28L25.5 31.5H10.5Z" fill="#2c3036"/>
<path d="M11 16Q14 14 17 16T23 16 27 14" stroke="#d0d020" stroke-width="1.6" fill="none"/></g><g transform="translate(734 53)"><rect x="1" y="1" width="37" height="37" fill="#fbe9c6" stroke="#0a1a70" stroke-width="1.8"/><rect x="2.5" y="2.5" width="34" height="34" fill="none" stroke="#fff6e4" stroke-width="1"/>
<path d="M3.5 9.5L31 2.8L33.5 3.5L35.8 6V29.5L34 31.2H5L3.2 29.5Z" fill="#4a5060"/>
<path d="M5 10.6L31 4.6V25.5H5Z" fill="#f7f7fb"/>
<path d="M4.5 25.8H31.5L34.8 25V29L33.5 30.3H5.2L4.2 29Z" fill="#a4adbd"/><path d="M31.5 4.8L34.8 6.6V25L31.5 25.8Z" fill="#7c8494"/>
<path d="M8 35H28L25.5 31.5H10.5Z" fill="#2c3036"/>
<path d="M9 20L13 16L17 18L21 14L26 17" stroke="#1830a0" stroke-width="1.8" fill="none"/><path d="M9 16L13 13L17 16L21 11L26 15" stroke="#e04020" stroke-width="1.8" fill="none"/><path d="M9 18L14 17L18 19L22 16L27 16" stroke="#20a020" stroke-width="1.8" fill="none"/></g><g transform="translate(773 53)"><rect x="1" y="1" width="37" height="37" fill="#fbe9c6" stroke="#0a1a70" stroke-width="1.8"/><rect x="2.5" y="2.5" width="34" height="34" fill="none" stroke="#fff6e4" stroke-width="1"/>
<path d="M3.5 9.5L31 2.8L33.5 3.5L35.8 6V29.5L34 31.2H5L3.2 29.5Z" fill="#4a5060"/>
<path d="M5 10.6L31 4.6V25.5H5Z" fill="#f7f7fb"/>
<path d="M4.5 25.8H31.5L34.8 25V29L33.5 30.3H5.2L4.2 29Z" fill="#a4adbd"/><path d="M31.5 4.8L34.8 6.6V25L31.5 25.8Z" fill="#7c8494"/>
<path d="M8 35H28L25.5 31.5H10.5Z" fill="#2c3036"/>
<path d="M10 13Q14 20 19 18T28 14" stroke="#a090d0" stroke-width="1.3" fill="none"/></g><g transform="translate(818 53)"><rect x="1" y="1" width="37" height="37" fill="#fbe9c6" stroke="#0a1a70" stroke-width="1.8"/><rect x="2.5" y="2.5" width="34" height="34" fill="none" stroke="#fff6e4" stroke-width="1"/>
<path d="M3.5 9.5L31 2.8L33.5 3.5L35.8 6V29.5L34 31.2H5L3.2 29.5Z" fill="#4a5060"/>
<path d="M5 10.6L31 4.6V25.5H5Z" fill="#f7f7fb"/>
<path d="M4.5 25.8H31.5L34.8 25V29L33.5 30.3H5.2L4.2 29Z" fill="#a4adbd"/><path d="M31.5 4.8L34.8 6.6V25L31.5 25.8Z" fill="#7c8494"/>
<path d="M8 35H28L25.5 31.5H10.5Z" fill="#2c3036"/>
<path d="M12 22L15 9L24 19Z" fill="#30c040"/><path d="M12 22L19 15L24 19Z" fill="#3050f0"/><path d="M15 9L19 15L24 19Z" fill="#f0e020"/><path d="M12 22L18 18L24 19Z" fill="#e03050"/></g><g transform="translate(863 53)"><rect x="1" y="1" width="37" height="37" fill="#fbe9c6" stroke="#0a1a70" stroke-width="1.8"/><rect x="2.5" y="2.5" width="34" height="34" fill="none" stroke="#fff6e4" stroke-width="1"/>
<path d="M3.5 9.5L31 2.8L33.5 3.5L35.8 6V29.5L34 31.2H5L3.2 29.5Z" fill="#4a5060"/>
<path d="M5 10.6L31 4.6V25.5H5Z" fill="#f7f7fb"/>
<path d="M4.5 25.8H31.5L34.8 25V29L33.5 30.3H5.2L4.2 29Z" fill="#a4adbd"/><path d="M31.5 4.8L34.8 6.6V25L31.5 25.8Z" fill="#7c8494"/>
<path d="M8 35H28L25.5 31.5H10.5Z" fill="#2c3036"/>
<path d="M10 22L26 18" stroke="#c8d020" stroke-width="1.5" fill="none"/></g><g transform="translate(902 53)"><rect x="1" y="1" width="37" height="37" fill="#fbe9c6" stroke="#0a1a70" stroke-width="1.8"/><rect x="2.5" y="2.5" width="34" height="34" fill="none" stroke="#fff6e4" stroke-width="1"/>
<path d="M3.5 9.5L31 2.8L33.5 3.5L35.8 6V29.5L34 31.2H5L3.2 29.5Z" fill="#4a5060"/>
<path d="M5 10.6L31 4.6V25.5H5Z" fill="#f7f7fb"/>
<path d="M4.5 25.8H31.5L34.8 25V29L33.5 30.3H5.2L4.2 29Z" fill="#a4adbd"/><path d="M31.5 4.8L34.8 6.6V25L31.5 25.8Z" fill="#7c8494"/>
<path d="M8 35H28L25.5 31.5H10.5Z" fill="#2c3036"/>
<path d="M10 16L27 9" stroke="#d0d020" stroke-width="1.5" fill="none"/></g><g transform="translate(947 53)"><rect x="1" y="1" width="37" height="37" fill="#fbe9c6" stroke="#0a1a70" stroke-width="1.8"/><rect x="2.5" y="2.5" width="34" height="34" fill="none" stroke="#fff6e4" stroke-width="1"/>
<path d="M3.5 9.5L31 2.8L33.5 3.5L35.8 6V29.5L34 31.2H5L3.2 29.5Z" fill="#4a5060"/>
<path d="M5 10.6L31 4.6V25.5H5Z" fill="#f7f7fb"/>
<path d="M4.5 25.8H31.5L34.8 25V29L33.5 30.3H5.2L4.2 29Z" fill="#a4adbd"/><path d="M31.5 4.8L34.8 6.6V25L31.5 25.8Z" fill="#7c8494"/>
<path d="M8 35H28L25.5 31.5H10.5Z" fill="#2c3036"/>
<path d="M9 12L28 8M9 14L28 10M9 16L28 13M9 19L28 16M9 21L28 19M9 23L28 21" stroke-width="1.3" fill="none"/><path d="M9 12L28 8" stroke="#d0d020" stroke-width="1.3"/><path d="M9 14L28 10" stroke="#40d0d0" stroke-width="1.3"/><path d="M9 16L28 13" stroke="#40c040" stroke-width="1.3"/><path d="M9 19L28 16" stroke="#e04080" stroke-width="1.3"/><path d="M9 21L28 19" stroke="#d03070" stroke-width="1.3"/><path d="M9 23L28 21" stroke="#2040c0" stroke-width="1.3"/></g><g transform="translate(986 53)"><rect x="1" y="1" width="37" height="37" fill="#fbe9c6" stroke="#0a1a70" stroke-width="1.8"/><rect x="2.5" y="2.5" width="34" height="34" fill="none" stroke="#fff6e4" stroke-width="1"/>
<path d="M3.5 9.5L31 2.8L33.5 3.5L35.8 6V29.5L34 31.2H5L3.2 29.5Z" fill="#4a5060"/>
<path d="M5 10.6L31 4.6V25.5H5Z" fill="#f7f7fb"/>
<path d="M4.5 25.8H31.5L34.8 25V29L33.5 30.3H5.2L4.2 29Z" fill="#a4adbd"/><path d="M31.5 4.8L34.8 6.6V25L31.5 25.8Z" fill="#7c8494"/>
<path d="M8 35H28L25.5 31.5H10.5Z" fill="#2c3036"/>
<path d="M9 13L13 12L17 13L21 11L28 11" stroke="#e02020" stroke-width="1.8" fill="none"/><path d="M9 14L13 13L17 12L21 13L28 12" stroke="#2030a0" stroke-width="1.4" fill="none"/><path d="M9 22L12 19L16 21L20 18L24 21L28 19" stroke="#c020c0" stroke-width="1.5" fill="none"/></g>
</svg>
<svg class="a" style="left:0;top:693px" width="1024" height="41" viewBox="0 693 1024 41"><rect x="0" y="693" width="1024" height="21" fill="#ece9d8"/><rect x="0" y="693" width="1024" height="3" fill="#fbfaf2"/><rect x="0" y="696" width="1024" height="1" fill="#2a2a2a"/><rect x="0" y="714" width="1024" height="20" fill="#c3d5f5"/><rect x="0" y="714" width="1024" height="1" fill="#9fb7e0"/><rect x="0.5" y="696.5" width="53" height="18" fill="#fff" stroke="#111"/><rect x="2" y="698" width="15.5" height="14.5" rx="2" fill="#c3d0f2"/><rect x="19" y="698" width="15.5" height="14.5" rx="2" fill="#c3d0f2"/><rect x="36" y="698" width="15.5" height="14.5" rx="2" fill="#c3d0f2"/><path d="M6 701l7 7M13 701l-7 7" stroke="#4a5a8c" stroke-width="1.6"/><path d="M29 701l-4 4 4 4z" fill="#4a5a8c"/><path d="M42 701l4 4-4 4z" fill="#4a5a8c"/><path d="M418 697L426 714L497 714L504 697Z" fill="#fff"/><text x="71" y="709.5" font-family="Liberation Sans" font-size="10.5" fill="#000" textLength="40" lengthAdjust="spacingAndGlyphs">Measures</text><path d="M119 697L127 714M123 705.5L119 714" stroke="#111" stroke-width="1" fill="none"/><text x="134.4" y="709.5" font-family="Liberation Sans" font-size="10.5" fill="#000" textLength="43.599999999999994" lengthAdjust="spacingAndGlyphs">Luminance</text><path d="M184 697L192 714M188 705.5L184 714" stroke="#111" stroke-width="1" fill="none"/><text x="200.6" y="709.5" font-family="Liberation Sans" font-size="10.5" fill="#000" textLength="31.400000000000006" lengthAdjust="spacingAndGlyphs">Gamma</text><path d="M238 697L246 714M242 705.5L238 714" stroke="#111" stroke-width="1" fill="none"/><text x="255.3" y="709.5" font-family="Liberation Sans" font-size="10.5" fill="#000" textLength="49.39999999999998" lengthAdjust="spacingAndGlyphs">RGB Levels</text><path d="M313 697L321 714M317 705.5L313 714" stroke="#111" stroke-width="1" fill="none"/><text x="332.8" y="709.5" font-family="Liberation Sans" font-size="10.5" fill="#000" textLength="72.80000000000001" lengthAdjust="spacingAndGlyphs">Color temperature</text><path d="M421 706L417 714" stroke="#111" stroke-width="1" fill="none"/><text x="429.2" y="709.5" font-weight="bold" font-family="Liberation Sans" font-size="10.5" fill="#000" textLength="62.80000000000001" lengthAdjust="spacingAndGlyphs">CIE Diagram</text><text x="516" y="709.5" font-family="Liberation Sans" font-size="10.5" fill="#000" textLength="68" lengthAdjust="spacingAndGlyphs">Near Black Scale</text><path d="M593 697L601 714M597 705.5L593 714" stroke="#111" stroke-width="1" fill="none"/><text x="615.5" y="709.5" font-family="Liberation Sans" font-size="10.5" fill="#000" textLength="70.0" lengthAdjust="spacingAndGlyphs">Near White Scale</text><path d="M695 697L703 714M699 705.5L695 714" stroke="#111" stroke-width="1" fill="none"/><text x="719.5" y="709.5" font-family="Liberation Sans" font-size="10.5" fill="#000" textLength="90.0" lengthAdjust="spacingAndGlyphs">Saturation -luminance</text><path d="M830 705.5L826 714" stroke="#111" stroke-width="1" fill="none"/><text x="844.5" y="709.5" font-family="Liberation Sans" font-size="10.5" fill="#000" textLength="11.5" lengthAdjust="spacingAndGlyphs">Sa</text><path d="M54 697L62 714M418 697L426 714M504 697L496 714M826 697L834 714" stroke="#111" stroke-width="1" fill="none"/><rect x="62" y="714" width="760" height="1" fill="#555"/><rect x="856" y="698" width="13" height="12" rx="2" fill="#6a7a20"/><rect x="858" y="699" width="8" height="7" fill="#d02020"/><circle cx="866" cy="709" r="3" fill="#f0e020"/><rect x="872.5" y="698.5" width="13" height="13" fill="#fff" stroke="#d8d8d0"/><text transform="translate(888 709.5) scale(1 1.25)" font-family="Liberation Mono" font-size="10" fill="#b4b4b4">Adjust XYZ</text><rect x="950.5" y="698.5" width="13" height="13" fill="#eef0f8" stroke="#1c3c70"/><text transform="translate(966 709.5) scale(1 1.25)" font-family="Liberation Mono" font-size="10" fill="#000">Reference</text><rect x="826.5" y="715.5" width="32" height="17" fill="#c9d9f7" stroke="#7e9ad0"/><path d="M827 732.5H859V716" stroke="#f4f8ff" fill="none"/><rect x="862.5" y="715.5" width="76" height="17" fill="#c9d9f7" stroke="#7e9ad0"/><path d="M863 732.5H939V716" stroke="#f4f8ff" fill="none"/><rect x="942.5" y="715.5" width="22" height="17" fill="#c9d9f7" stroke="#7e9ad0"/><path d="M943 732.5H965V716" stroke="#f4f8ff" fill="none"/><rect x="968.5" y="715.5" width="22" height="17" fill="#c9d9f7" stroke="#7e9ad0"/><path d="M969 732.5H991V716" stroke="#f4f8ff" fill="none"/><rect x="994.5" y="715.5" width="29" height="17" fill="#c9d9f7" stroke="#7e9ad0"/><path d="M995 732.5H1024V716" stroke="#f4f8ff" fill="none"/><text x="2.5" y="727.8" font-family="Liberation Serif" font-size="11.5" fill="#000" stroke="#000" stroke-width="0.25" textLength="30" lengthAdjust="spacingAndGlyphs">Ready</text></svg><svg class="a" style="left:0;top:734px" width="1024" height="34" viewBox="0 734 1024 34">
<defs>
<linearGradient id="tkg" x1="0" y1="0" x2="0" y2="1"><stop offset="0" stop-color="#1b4fc4"/><stop offset="0.04" stop-color="#3d86f0"/><stop offset="0.1" stop-color="#3579ea"/><stop offset="0.18" stop-color="#2a66de"/><stop offset="0.5" stop-color="#265fdc"/><stop offset="0.9" stop-color="#2358d4"/><stop offset="1" stop-color="#1e4cbf"/></linearGradient>
<linearGradient id="trg" x1="0" y1="0" x2="0" y2="1"><stop offset="0" stop-color="#1b4fc4"/><stop offset="0.05" stop-color="#20a8f0"/><stop offset="0.2" stop-color="#1690e8"/><stop offset="0.8" stop-color="#128ee8"/><stop offset="1" stop-color="#1070d0"/></linearGradient>
<linearGradient id="stg" x1="0" y1="0" x2="0" y2="1"><stop offset="0" stop-color="#5cb85c"/><stop offset="0.5" stop-color="#3a9a30"/><stop offset="1" stop-color="#2a7a20"/></linearGradient>
<radialGradient id="glb" cx="0.35" cy="0.3" r="0.7"><stop offset="0" stop-color="#a0e0a0"/><stop offset="0.5" stop-color="#208040"/><stop offset="1" stop-color="#104080"/></radialGradient>
</defs>
<rect x="0" y="734" width="1024" height="34" fill="url(#tkg)"/>
<rect x="875" y="734" width="149" height="34" fill="url(#trg)"/><rect x="875" y="735" width="1" height="33" fill="#0c58c8"/>
<path d="M0 737H88Q95 737 95 745V759Q95 765 88 765H0Z" fill="url(#stg)"/>
<path d="M118 746h12l4 4v10h-16z" fill="#e8f0fc" stroke="#204080"/><path d="M122 752q4-4 6 0" stroke="#204080" fill="none"/>
<circle cx="150" cy="752.5" r="7" fill="url(#glb)"/>
<rect x="166" y="745" width="15" height="15" fill="#eef2fa" stroke="#8090b0"/><text x="166.5" y="758" font-family="Liberation Serif" font-style="italic" font-weight="bold" font-size="14" fill="#2a50b0">W</text>
<ellipse cx="195.5" cy="752.5" rx="8" ry="6.5" fill="#3030b0" transform="rotate(-40 195.5 752.5)"/><ellipse cx="195.5" cy="752.5" rx="5.5" ry="4" fill="#d040a0" transform="rotate(-40 195.5 752.5)"/>
<rect x="211" y="747" width="15" height="11" fill="#000" stroke="#506080"/><text x="212" y="755.5" font-family="Liberation Sans" font-weight="bold" font-size="7" fill="#fff">C:\</text>
<path d="M237 745h10v10q-5 5-10 0z" fill="#a0d0f8"/><rect x="238" y="756" width="8" height="3" fill="#e0e8f0"/>
<rect x="257" y="750" width="15" height="8" rx="2" fill="#f0d080"/><rect x="260" y="745" width="9" height="6" fill="#f8f8f8"/><rect x="259" y="756" width="11" height="3" fill="#fff"/>
<circle cx="287" cy="752.5" r="7.5" fill="#2a90f8" stroke="#0a3a98" stroke-width="1"/><circle cx="287" cy="752.5" r="5" fill="none" stroke="#fff" stroke-width="2"/><rect x="283" y="752" width="8" height="2" fill="#fff"/>
<rect x="304" y="746" width="7" height="12" fill="#f0d020"/><rect x="305" y="753" width="14" height="5" fill="#e02020"/><circle cx="312" cy="749" r="3.5" fill="#e0f0ff" stroke="#405080"/>
<path d="M327 753a7 6 0 1 1 13 2h-10a4 4 0 0 0 8 2" fill="none" stroke="#38a0f0" stroke-width="2.5"/><path d="M326 746q10-6 14 0" fill="none" stroke="#a0d0ff" stroke-width="1.3"/>
<rect x="349" y="748" width="16" height="10" fill="#0a0a2a"/><rect x="352" y="745" width="10" height="3" fill="#e8e8e8"/><rect x="352" y="758" width="10" height="2" fill="#e8e8e8"/><text x="350.5" y="756" font-family="Liberation Sans" font-weight="bold" font-size="7" fill="#40e060">ICO</text>
<rect x="372" y="745" width="16" height="15" fill="#f8d8a0" stroke="#e08830"/><circle cx="380" cy="752.5" r="5" fill="#fff4e0" stroke="#d08020"/><path d="M380 749v4h3" stroke="#d08020" fill="none"/>
<rect x="396" y="745" width="13" height="15" rx="1" fill="#a8c0e8" stroke="#6080c0"/><rect x="398" y="747" width="9" height="3" fill="#e0ecff"/>
<rect x="419" y="745" width="14" height="15" fill="#f0a020"/><path d="M421 745v15" stroke="#fff" stroke-width="2" stroke-dasharray="1.5 1.5"/><path d="M425 759l6-14" stroke="#f8f040" stroke-width="2"/>
<g fill="#f0c020"><rect x="445" y="747" width="12" height="4"/><rect x="445" y="753" width="12" height="4"/></g><g fill="#fff"><rect x="441" y="747" width="2" height="2"/><rect x="441" y="751" width="2" height="2"/><rect x="441" y="755" width="2" height="2"/></g><rect x="440" y="744" width="18" height="2" fill="#80c0ff"/>
<g fill="#1a3aa0"><circle cx="473" cy="744" r="1"/><circle cx="475" cy="747" r="1"/><circle cx="473" cy="750" r="1"/><circle cx="475" cy="753" r="1"/><circle cx="473" cy="756" r="1"/><circle cx="475" cy="759" r="1"/><circle cx="473" cy="762" r="1"/>
<circle cx="699" cy="744" r="1"/><circle cx="702" cy="747" r="1"/><circle cx="699" cy="750" r="1"/><circle cx="702" cy="753" r="1"/><circle cx="699" cy="756" r="1"/><circle cx="702" cy="759" r="1"/><circle cx="699" cy="762" r="1"/></g>
<rect x="483" y="742" width="68" height="23" rx="3" fill="#1c48b8"/><rect x="484" y="743" width="66" height="2" fill="#163a9a"/>
<rect x="553" y="742" width="67" height="23" rx="3" fill="#3a80f2"/><rect x="553" y="742" width="67" height="1.5" fill="#5a98f8"/>
<rect x="622.5" y="742" width="68" height="23" rx="3" fill="#3a80f2"/><rect x="622.5" y="742" width="68" height="1.5" fill="#5a98f8"/>
<rect x="494" y="760" width="14" height="1.5" fill="#101010"/><rect x="494.5" y="749" width="3.5" height="11" rx="1.2" fill="#e01018"/><rect x="499" y="747" width="3.5" height="13" rx="1.2" fill="#18d018"/><rect x="503.5" y="751" width="3.5" height="9" rx="1.2" fill="#1020c8"/>
<text x="514" y="758" font-family="Liberation Mono" font-size="11" fill="#fff">H...</text>
<path d="M563 749h5l1.5 2h9v9h-15.5z" fill="#f0c850" stroke="#b08020" stroke-width="0.8"/>
<rect x="583" y="746" width="12" height="12" fill="none" stroke="#fff" stroke-width="1.3"/><path d="M586 749l6 6M592 749l-6 6" stroke="#fff"/>
<text x="596" y="758" font-family="Liberation Mono" font-size="11" fill="#fff">...</text>
<rect x="633" y="746" width="15" height="13" fill="#2a58a0" stroke="#9ab8e0" stroke-width="0.6"/><text x="634" y="756" font-family="Liberation Sans" font-weight="bold" font-size="8" fill="#b8d8ff">Ps</text>
<text x="652" y="758" font-family="Liberation Mono" font-size="11" fill="#fff">A...</text>
<rect x="712" y="749" width="15" height="9" rx="1" fill="#fff" stroke="#101010" stroke-width="1.5"/><g fill="#111"><rect x="714" y="751" width="2" height="2"/><rect x="717" y="751" width="2" height="2"/><rect x="720" y="751" width="2" height="2"/><rect x="723" y="751" width="2" height="2"/><rect x="715" y="754" width="10" height="2"/></g>
<path d="M735 760l7-8" stroke="#e0e0e0" stroke-width="2"/><circle cx="745" cy="749" r="3.5" fill="#d0d0d0" stroke="#303030"/>
<rect x="765.5" y="741" width="63" height="22" fill="#88f048" stroke="#c8d8c0"/><rect x="829" y="746" width="4" height="12" fill="#a8a890"/>
<text x="783" y="757.5" font-family="Liberation Mono" font-weight="bold" font-size="12" fill="#101010">100%</text>
<path d="M843 748h8v9h-8z" fill="#000"/><path d="M851 749h6M851 756h6M839 752.5h5" stroke="#000" stroke-width="2"/>
<circle cx="877" cy="752" r="9" fill="#3a8ef0" stroke="#d0e8ff" stroke-width="1.3"/><path d="M879 748l-4 4 4 4" fill="none" stroke="#fff" stroke-width="2"/>
<rect x="890" y="746" width="12" height="10" fill="#98a8c8" stroke="#304060"/><path d="M897 756l5 5M902 756l-5 5" stroke="#e02020" stroke-width="1.8"/><path d="M903 745q3 5 0 10M906 744q4 7 0 12" fill="none" stroke="#e0f0ff"/>
<path d="M908 746q8 10 12 8l5 3-3 3q-5-2-14-14z" fill="#e8e8e8" stroke="#404040" stroke-width="0.8"/><path d="M926 757q3 0 3 3" stroke="#f0d020" stroke-width="2" fill="none"/>
<path d="M924 752l4 4M928 752l-4 4" stroke="#303030"/><rect x="931" y="745" width="5" height="15" rx="1" fill="#d8d8d8" stroke="#404040" stroke-width="0.8"/>
<circle cx="950" cy="753" r="6" fill="none" stroke="#101820" stroke-width="1.5"/><path d="M944 749q6 4 12 0" stroke="#101820" fill="none"/>
<rect x="962" y="745" width="15" height="15" fill="#2050c0" stroke="#102060"/><rect x="964" y="747" width="11" height="11" fill="#3a70e0"/>
<text x="981" y="757.5" font-family="Liberation Sans" font-size="11.5" fill="#fff" letter-spacing="0.4">12:28</text>
</svg>
<svg class="a" style="left:0;top:728px" width="140" height="40" viewBox="0 728 140 40"><ellipse cx="26" cy="747" rx="19" ry="14" fill="#58b048"/>
<path d="M14 748q10-10 24-6q4 6-2 12q-10 6-20 2z" fill="#9ad08a"/>
<ellipse cx="26" cy="746.5" rx="19" ry="14" fill="none" stroke="#1a6ec8" stroke-width="5"/>
<ellipse cx="26" cy="746.5" rx="22" ry="17" fill="none" stroke="#a8d8f0" stroke-width="0.8" opacity="0.7"/>
<path d="M8 742L25 736L31 750L21 753Z" fill="#1a6ec8"/>
<rect x="11" y="750" width="8" height="8" fill="#6a70e0"/><rect x="19" y="752" width="8" height="7" fill="#f0c820"/>
<g fill="none" stroke-linecap="square"><g stroke="#e8f4ff" stroke-width="4.2"><path d="M50 741h10M48 745h14M55 745l-5 9M57 748l6 6M52 749l8 4M70 740v15M66 744h9v8h-9zM66 748h9M80 741l-3 7M82 744v10h8M83 748h6M95 740l-5 8M95 747h10M102 741l-6 13h11M109 742h14M116 742v12l4-2"/></g>
<g stroke="#1c64c8" stroke-width="2.2"><path d="M50 741h10M48 745h14M55 745l-5 9M57 748l6 6M52 749l8 4M70 740v15M66 744h9v8h-9zM66 748h9M80 741l-3 7M82 744v10h8M83 748h6M95 740l-5 8M95 747h10M102 741l-6 13h11M109 742h14M116 742v12l4-2"/></g></g>
<text x="47" y="763.5" font-family="Liberation Sans" font-weight="bold" font-size="7.5" fill="#b8d8f0" textLength="72" lengthAdjust="spacingAndGlyphs">JD-BBS.COM</text>
</svg>
<script>
(function(){
var cv=document.getElementById('cv'),ctx=cv.getContext('2d');
var W=1024,H=768;
var img=ctx.createImageData(W,H),d=img.data;
var L=[[0.1741,0.0050],[0.1740,0.0050],[0.1738,0.0049],[0.1736,0.0049],[0.1733,0.0048],[0.1730,0.0048],[0.1726,0.0048],[0.1721,0.0048],[0.1714,0.0051],[0.1703,0.0058],[0.1689,0.0069],[0.1669,0.0086],[0.1644,0.0109],[0.1611,0.0138],[0.1566,0.0177],[0.1510,0.0227],[0.1440,0.0297],[0.1355,0.0399],[0.1241,0.0578],[0.1096,0.0868],[0.0913,0.1327],[0.0687,0.2007],[0.0454,0.2950],[0.0235,0.4127],[0.0082,0.5384],[0.0039,0.6548],[0.0139,0.7502],[0.0389,0.8120],[0.0743,0.8338],[0.1142,0.8262],[0.1547,0.8059],[0.1929,0.7816],[0.2296,0.7543],[0.2658,0.7243],[0.3016,0.6923],[0.3373,0.6589],[0.3731,0.6245],[0.4087,0.5896],[0.4441,0.5547],[0.4788,0.5202],[0.5125,0.4866],[0.5448,0.4544],[0.5752,0.4242],[0.6029,0.3965],[0.6270,0.3725],[0.6482,0.3514],[0.6658,0.3340],[0.6801,0.3197],[0.6915,0.3083],[0.7006,0.2993],[0.7079,0.2920],[0.7140,0.2859],[0.7190,0.2809],[0.7230,0.2770],[0.7260,0.2740],[0.7283,0.2717],[0.7300,0.2700],[0.7311,0.2689],[0.7320,0.2680],[0.7327,0.2673],[0.7334,0.2666],[0.7340,0.2660],[0.7344,0.2656],[0.7346,0.2654],[0.7347,0.2653]];
function PX(x){return 1.5+1275*x} function PY(y){return 692.7-665*y}
var P0=L.map(function(p){return [PX(p[0]),PY(p[1])]});var P=[];
for(var i=0;i<P0.length-1;i++){var p0=P0[Math.max(0,i-1)],p1=P0[i],p2=P0[i+1],p3=P0[Math.min(P0.length-1,i+2)];
for(var k=0;k<8;k++){var t=k/8,t2=t*t,t3=t2*t;
P.push([0.5*((2*p1[0])+(-p0[0]+p2[0])*t+(2*p0[0]-5*p1[0]+4*p2[0]-p3[0])*t2+(-p0[0]+3*p1[0]-3*p2[0]+p3[0])*t3),
0.5*((2*p1[1])+(-p0[1]+p2[1])*t+(2*p0[1]-5*p1[1]+4*p2[1]-p3[1])*t2+(-p0[1]+3*p1[1]-3*p2[1]+p3[1])*t3)]);}}
P.push(P0[P0.length-1]);
var T=[[345,346],[776,480],[197,661]];
function spans(poly,yc){var xs=[];for(var i=0;i<poly.length;i++){var a=poly[i],b=poly[(i+1)%poly.length];if((a[1]<=yc&&b[1]>yc)||(b[1]<=yc&&a[1]>yc)){xs.push(a[0]+(yc-a[1])*(b[0]-a[0])/(b[1]-a[1]));}}xs.sort(function(p,q){return p-q});return xs;}
var GX=0.30,GY=0.31,SIG=0.075,KOUT=0.75,HX=282,HY=488,HR=78,HA=0.4;
function col(x,y,k,o){
  var X=x/y,Z=(1-x-y)/y;
  var r=3.2406*X-1.5372-0.4986*Z,g=-0.9689*X+1.8758+0.0415*Z,b=0.0557*X-0.2040+1.0570*Z;
  var m=Math.min(r,g,b);if(m<0){r-=m;g-=m;b-=m;}
  var M=Math.max(r,g,b);r/=M;g/=M;b/=M;
  var dx=x-GX,dy=y-GY,w=Math.exp(-(dx*dx+dy*dy)/(SIG*SIG));
  r=r*(1-w)+w;g=g*(1-w)+w;b=b*(1-w)+w;
  var R=Math.pow(r,1/2.2)*255*k,G=Math.pow(g,1/2.2)*255*k,B=Math.pow(b,1/2.2)*255*k;
  if(k<1){var qx=x*1275+1.5-HX,qy=692.7-665*y-HY,dd=(qx*qx+qy*qy)/(HR*HR),w2=dd<1?HA*(1-dd)*(1-dd):0;R=R*(1-w2)+230*w2;G=G*(1-w2)+240*w2;B=B*(1-w2)+235*w2;}
  d[o]=R;d[o+1]=G;d[o+2]=B;d[o+3]=255;
}
for(var py=96;py<693;py++){
  for(var px=3;px<1022;px++){var o=(py*W+px)*4;d[o+3]=255;}
  var xs=spans(P,py+0.5);
  var y=(692.7-(py+0.5))/665;
  for(var s=0;s+1<xs.length;s+=2){
    var x0=Math.max(3,Math.round(xs[s])),x1=Math.min(1022,Math.round(xs[s+1]));
    for(var px=x0;px<x1;px++){col((px+0.5-1.5)/1275,y,KOUT,(py*W+px)*4);}
  }
}
// grid
var gx=[129,257,384,512,639,767,894],gy=[161,227,294,360,427,493,560,626];
function gridpx(o){if(d[o]+d[o+1]+d[o+2]<6){d[o]=d[o+1]=d[o+2]=80;}else{d[o]*=0.55;d[o+1]*=0.55;d[o+2]*=0.55;}}
for(var i=0;i<gx.length;i++){for(var py=96;py<693;py++)gridpx((py*W+gx[i])*4);}
for(var i=0;i<gy.length;i++){for(var px=3;px<1022;px++)gridpx((gy[i]*W+px)*4);}
// inner triangle
for(var py=96;py<693;py++){
  var xs=spans(T,py+0.5);if(xs.length<2)continue;
  var y=(692.7-(py+0.5))/665;
  var x0=Math.round(xs[0]),x1=Math.round(xs[xs.length-1]);
  for(var px=x0;px<x1;px++){col((px+0.5-1.5)/1275,y,1,(py*W+px)*4);}
}
ctx.putImageData(img,0,0);
})();
</script>
</body></html>
